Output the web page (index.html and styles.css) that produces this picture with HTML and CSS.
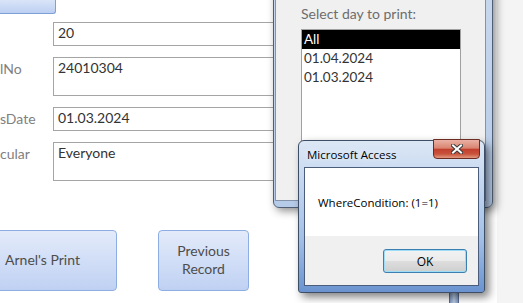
FILE: index.html
```html
<!DOCTYPE html>
<html lang="en">
<head>
  <meta charset="UTF-8">
  <title>Print selected day</title>
  <link rel="stylesheet" href="styles.css">
</head>
<body>
  <div class="form">
    <div class="top-btn"></div>
    <div class="fields">
      <span class="lbl"></span>
      <div class="box">20</div>
      <span class="lbl">lNo</span>
      <div class="box tall">24010304</div>
      <span class="lbl">sDate</span>
      <div class="box">01.03.2024</div>
      <span class="lbl">cular</span>
      <div class="box tall">Everyone</div>
    </div>
    <div class="actions">
      <button class="cmd wide">Arnel's Print</button>
      <button class="cmd">Previous<br>Record</button>
    </div>
  </div>

  <!-- popup form with the day list -->
  <div class="popup">
    <div class="popup-client">
      <div class="prompt">Select day to print:</div>
      <ul class="daylist">
        <li class="sel">All</li>
        <li>01.04.2024</li>
        <li>01.03.2024</li>
      </ul>
    </div>
  </div>
  <div class="stub"></div>

  <!-- message box -->
  <div class="msgbox">
    <div class="titlebar">
      <span class="title">Microsoft Access</span>
      <span class="close">
        <svg width="12" height="10" viewBox="0 0 12 10">
          <path d="M2 1.5 L10 8.5 M10 1.5 L2 8.5" stroke="#3b3b3b" stroke-width="4" stroke-linecap="square" fill="none"/>
          <path d="M2 1.5 L10 8.5 M10 1.5 L2 8.5" stroke="#ffffff" stroke-width="2" stroke-linecap="square" fill="none"/>
        </svg>
      </span>
    </div>
    <div class="msg-client">
      <div class="msg-text">WhereCondition: (1=1)</div>
      <div class="msg-buttons">
        <button class="ok">OK</button>
      </div>
    </div>
  </div>
</body>
</html>
```

FILE: styles.css
```css
body {
  margin: 0;
  width: 523px;
  height: 303px;
  overflow: hidden;
  position: relative;
  background: #f4f4f4;
  font-family: Lato, "Open Sans", sans-serif;
}
.form {
  width: 497px;
  height: 303px;
  background: #fff;
  display: flex;
  flex-direction: column;
}
.top-btn {
  width: 57px;
  height: 14px;
  margin-left: -1px;
  box-sizing: border-box;
  border: 1px solid #7f9fd8;
  border-top: 0;
  border-radius: 0 0 3px 0;
  background: linear-gradient(#d9e4f8, #bdd0f2);
}
.fields {
  display: grid;
  grid-template-columns: 53px 247px;
  row-gap: 11px;
  margin-top: 8px;
}
.lbl {
  font-size: 14px;
  line-height: 19px;
  padding-top: 2px;
  color: #808080;
}
.box {
  height: 24px;
  box-sizing: border-box;
  border: 1px solid #a5a5a5;
  padding: 0 4px;
  font-size: 14px;
  line-height: 19px;
  color: #333;
}
.box.tall {
  height: 39px;
}
.actions {
  display: flex;
  gap: 41px;
  margin-top: 49px;
  margin-left: -32px;
}
.cmd {
  width: 149px;
  height: 61px;
  border: 1px solid #8eaee3;
  border-radius: 4px;
  background: linear-gradient(#e3ebfa, #bfd1f3);
  font-family: Lato, "Open Sans", sans-serif;
  font-size: 14px;
  line-height: 18px;
  color: #4d4d4d;
  padding: 0 0 2px;
}
.cmd:not(.wide) {
  width: 91px;
}

/* popup window */
.popup {
  position: absolute;
  left: 273px;
  top: -40px;
  width: 220px;
  height: 248px;
  box-sizing: border-box;
  padding: 0 6px 6px 1px;
  border: 1px solid #4f5e75;
  border-radius: 0 0 6px 6px;
  background: linear-gradient(#c9d9ee, #b6cbe8);
  box-shadow: 3px 3px 8px rgba(0, 0, 0, 0.45);
}
.popup-client {
  height: 100%;
  box-sizing: border-box;
  border: 1px solid #8493aa;
  background: #f0f0f0;
  padding: 43px 0 0 25px;
}
.prompt {
  font-size: 14px;
  line-height: 18px;
  color: #6d6d6d;
  margin-bottom: 6px;
}
.daylist {
  list-style: none;
  margin: 0;
  padding: 0;
  width: 160px;
  height: 170px;
  box-sizing: border-box;
  border: 1px solid #a0a0a0;
  background: #fff;
}
.daylist li {
  height: 19px;
  line-height: 19px;
  padding-left: 2px;
  font-size: 13.5px;
  color: #333;
}
.daylist li.sel {
  background: #000;
  color: #fff;
}
.stub {
  position: absolute;
  left: 449px;
  top: 290px;
  width: 8px;
  height: 14px;
  border: 1px solid #5a6c8c;
  background: linear-gradient(to right, #8098be, #b9cbe4, #8098be);
}

/* message box */
.msgbox {
  position: absolute;
  left: 298px;
  top: 140px;
  width: 187px;
  height: 153px;
  box-sizing: border-box;
  padding: 0 5px 5px 5px;
  border: 1px solid #3d4e66;
  border-radius: 6px 6px 3px 3px;
  background: linear-gradient(#dce7f5 0%, #bdd2ee 35%, #a4bfe6 65%, #6a93d0 100%);
  box-shadow: 4px 4px 9px rgba(0, 0, 0, 0.5);
  font-family: "Open Sans", "Noto Sans", sans-serif;
}
.titlebar {
  height: 26px;
  display: flex;
  align-items: center;
  padding-left: 3px;
}
.title {
  font-size: 11.5px;
  color: #000;
  text-shadow: 0 0 6px rgba(255, 255, 255, 0.9);
}
.close {
  position: absolute;
  right: 4px;
  top: -2px;
  width: 47px;
  height: 20px;
  box-sizing: border-box;
  border: 1px solid #6d2c22;
  border-radius: 0 0 4px 4px;
  background: linear-gradient(#eab1a4 0%, #d98571 45%, #c2402c 52%, #c9533d 78%, #e29a80 100%);
  display: flex;
  align-items: center;
  justify-content: center;
}
.msg-client {
  border: 1px solid #4b5d7a;
  background: #fff;
}
.msg-text {
  height: 68px;
  display: flex;
  align-items: center;
  padding-left: 13px;
  font-size: 11.5px;
  color: #000;
}
.msg-buttons {
  height: 49px;
  background: #f0f0f0;
  display: flex;
  justify-content: flex-end;
  align-items: flex-start;
  padding: 13px 11px 0 0;
  box-sizing: border-box;
}
.ok {
  width: 84px;
  height: 24px;
  border: 1px solid #3c7fb1;
  border-radius: 3px;
  background: linear-gradient(#f2f2f2 0%, #ebebeb 48%, #dddddd 52%, #cfcfcf 100%);
  box-shadow: inset 0 0 0 1px #9fdcf5;
  font-family: "Open Sans", "Noto Sans", sans-serif;
  font-size: 12px;
  color: #000;
  padding: 0;
}
```
